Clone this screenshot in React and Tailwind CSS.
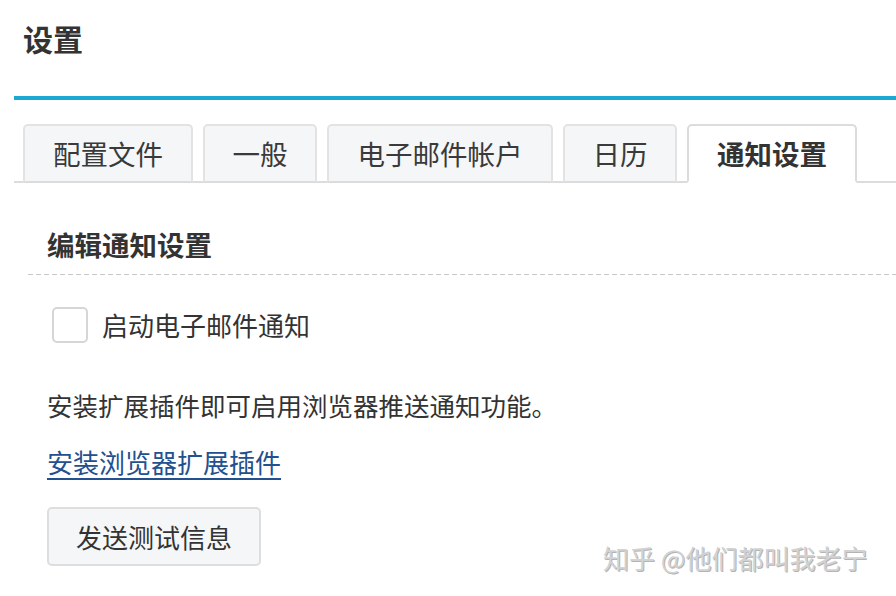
import React, { useState } from "react";

const tabs = [
  { label: "配置文件", width: "w-[170px]" },
  { label: "一般", width: "w-[114px]" },
  { label: "电子邮件帐户", width: "w-[226px]" },
  { label: "日历", width: "w-[114px]" },
  { label: "通知设置", width: "w-[170px]" },
];

export default function App() {
  const [active, setActive] = useState(4);
  const [emailOn, setEmailOn] = useState(false);

  return (
    <div className="relative w-[896px] h-[596px] overflow-hidden bg-white text-[#333] font-['Noto_Sans_CJK_SC','Noto_Sans',sans-serif]">
      <div className="pl-[14px]">
        {/* header */}
        <div className="h-[96px] pl-[9px] pt-[23px]">
          <h1 className="text-[30px] leading-[30px] font-bold text-[#333]">设置</h1>
        </div>
        <div className="h-[4px] bg-[#1ba8d3]" />

        {/* tabs */}
        <div className="mt-[24px] flex gap-[10px] pl-[9px] border-b-2 border-[#dcdcdc]">
          {tabs.map((t, i) => (
            <button
              key={t.label}
              onClick={() => setActive(i)}
              className={`${t.width} h-[59px] -mb-[2px] flex items-center justify-center rounded-t-[5px] border-2 text-[27.5px] leading-none ${
                i === active
                  ? "bg-white border-[#dcdcdc] border-b-white font-bold text-[#333]"
                  : "bg-[#f5f6f8] border-[#e3e3e3] border-b-[#dcdcdc] text-[#3a3a3a]"
              }`}
            >
              {t.label}
            </button>
          ))}
        </div>

        {/* section */}
        <div className="pl-[14px]">
          <div className="pt-[43px] pb-[12px] pl-[19px]">
            <h2 className="text-[27.5px] leading-[36px] font-bold text-[#333]">编辑通知设置</h2>
          </div>
          <div className="h-px bg-[repeating-linear-gradient(to_right,#c6c6c6_0,#c6c6c6_5px,transparent_5px,transparent_8px)]" />

          <div className="pl-[19px]">
            <label className="mt-[32px] flex items-center gap-[14px] pl-[5px] h-[36px] cursor-pointer">
              <span
                onClick={() => setEmailOn(!emailOn)}
                className={`w-[36px] h-[36px] rounded-[5px] border-2 border-[#d6d6d6] ${emailOn ? "bg-[#1ba8d3]" : "bg-white"}`}
              />
              <span className="text-[26px] leading-[36px] text-[#333]">启动电子邮件通知</span>
            </label>

            <p className="mt-[44px] text-[25.5px] leading-[36px] text-[#333]">
              安装扩展插件即可启用浏览器推送通知功能。
            </p>

            <a href="#" className="mt-[21px] block w-fit text-[26px] leading-[36px] text-[#23508f] underline underline-offset-[5px]">
              安装浏览器扩展插件
            </a>

            <button className="mt-[27px] w-[214px] h-[59px] rounded-[5px] border-2 border-[#dedede] bg-[#f5f6f8] text-[26px] text-[#333]">
              发送测试信息
            </button>
          </div>
        </div>
      </div>

      {/* watermark */}
      <div className="absolute left-[603px] top-[543px] text-[26px] leading-[30px] text-[#d2d2d2] [text-shadow:1px_1px_0_#b4b4b4] whitespace-nowrap">
        知乎 @他们都叫我老宁
      </div>
    </div>
  );
}
